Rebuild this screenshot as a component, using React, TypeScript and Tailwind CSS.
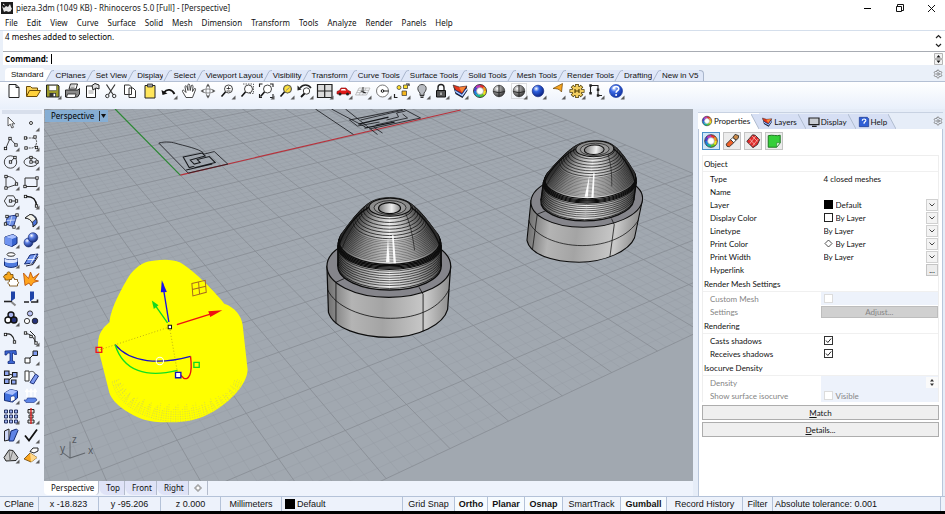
import React from "react";
import { Settings } from "lucide-react";

/* ---------- shared data ---------- */

const MENUS = ["File", "Edit", "View", "Curve", "Surface", "Solid", "Mesh", "Dimension", "Transform", "Tools", "Analyze", "Render", "Panels", "Help"];

const TOOL_TABS = [
  "Standard", "CPlanes", "Set View", "Display", "Select", "Viewport Layout", "Visibility", "Transform",
  "Curve Tools", "Surface Tools", "Solid Tools", "Mesh Tools", "Render Tools", "Drafting", "New in V5",
];

const WHEEL = ["#e6352b", "#f39a1e", "#f2e21c", "#5cc52c", "#14b6a0", "#1f7fe0", "#4a3fd0", "#c238b8"];

/* ---------- icon helpers ---------- */

function ColorWheel({ cx = 9, cy = 9, r = 5 }: { cx?: number; cy?: number; r?: number }) {
  return (
    <g fill="none" strokeWidth={r * 0.56}>
      {WHEEL.map((c, i) => {
        const a = (i * Math.PI) / 4 - Math.PI / 2;
        const b = a + Math.PI / 4 + 0.05;
        return (
          <path
            key={c}
            stroke={c}
            d={`M${cx + r * Math.cos(a)} ${cy + r * Math.sin(a)}A${r} ${r} 0 0 1 ${cx + r * Math.cos(b)} ${cy + r * Math.sin(b)}`}
          />
        );
      })}
      <circle cx={cx} cy={cy} r={r * 1.3} stroke="#222" strokeWidth={0.8} />
      <circle cx={cx} cy={cy} r={r * 0.7} stroke="#444" strokeWidth={0.4} fill="#fff" />
    </g>
  );
}

const Dot = ({ x, y }: { x: number; y: number }) => (
  <rect x={x - 1.2} y={y - 1.2} width={2.4} height={2.4} fill="#fff" stroke="#111" strokeWidth={0.8} />
);

const Ball = ({ id, x = 9, y = 9, r = 5.8, a, b }: { id: string; x?: number; y?: number; r?: number; a: string; b: string }) => (
  <>
    <defs>
      <radialGradient id={id} cx="35%" cy="30%" r="75%">
        <stop offset="0" stopColor="#fff" />
        <stop offset="0.35" stopColor={a} />
        <stop offset="1" stopColor={b} />
      </radialGradient>
    </defs>
    <circle cx={x} cy={y} r={r} fill={`url(#${id})`} stroke={b} strokeWidth={0.6} />
  </>
);

type Tool = { name: string; art: React.ReactNode; more?: boolean };

const LayersArt = (
  <>
    <path d="M2 3.500l2.500 8.500 7 4 5-7.500-1-4.500-5 7-6.500-4z" fill="#16181f" />
    <path d="M3.500 8l1.500 3 6.500 3.800 4.300-6.300v-1.500z" fill="#2c62d8" />
    <path d="M3 6.500l1.500 2.500 6.500 4 5-7v1.500l-4.700 6.500-6.600-4z" fill="#fff" />
    <path d="M2 3l6.500 2 7.500-1-5 7.500-6.500-3.500z" fill="#e6351c" stroke="#222" strokeWidth=".6" />
    <path d="M8 5.500l7-1-4 6z" fill="#f7873a" />
  </>
);

const MagnifierArt = (
  <>
    <circle cx="10.500" cy="7" r="4" fill="#fff" stroke="#444" />
    <path d="M7.500 10L3.500 14.500" stroke="#111" strokeWidth="1.600" />
  </>
);

const TOP_TOOLS: Tool[] = [
  { name: "New", art: <path d="M4 2.500h7l3 3v10H4zM11 2.500v3h3" fill="#fff" stroke="#222" /> },
  {
    name: "Open",
    art: (
      <>
        <path d="M2.500 14V4.500h4l1.500 1.500h5.500v3" fill="#f8d25a" stroke="#6b4a05" />
        <path d="M2.500 14.500l3-6h11l-3.500 6z" fill="#ffd23d" stroke="#6b4a05" />
      </>
    ),
  },
  {
    name: "Save",
    more: true,
    art: (
      <>
        <path d="M2.500 3h11.500l1 1v11H2.500z" fill="#9c9a2b" stroke="#222" />
        <path d="M5 3.500h7.500v5H5z" fill="#fff" stroke="#444" strokeWidth=".5" />
        <path d="M5.500 11h6.500v4H5.500z" fill="#333" />
        <path d="M9.500 11.700h1.700v2.500H9.500z" fill="#fff" />
      </>
    ),
  },
  {
    name: "Print",
    art: (
      <>
        <path d="M6 7l1.500-5h7L13 7z" fill="#fff" stroke="#222" />
        <path d="M2.500 8h12.500l1.500-1.500V12l-2 3H2.500z" fill="#8a8a8a" stroke="#222" />
        <path d="M4.500 12h8.500l-1 3.500H3.500z" fill="#fff" stroke="#222" strokeWidth=".8" />
        <path d="M8 4h4M7.500 5.500h4" stroke="#666" strokeWidth=".6" />
      </>
    ),
  },
  {
    name: "Document properties",
    art: (
      <>
        <path d="M3.500 4h9v11.500h-9z" fill="#fff" stroke="#222" />
        <path d="M9 3.500l3-2 4 1.500v4l-3-1-3 2z" fill="#ddd" stroke="#222" />
        <path d="M5.500 9h5M5.500 11h5" stroke="#777" strokeWidth=".7" />
      </>
    ),
  },
  {
    name: "Cut",
    art: (
      <g fill="none" stroke="#333">
        <path d="M4.500 2.500l6.500 10M13 2.500l-6.500 10" strokeWidth="1.200" />
        <circle cx="5.300" cy="14" r="1.700" />
        <circle cx="12.200" cy="14" r="1.700" />
      </g>
    ),
  },
  {
    name: "Copy",
    art: <path d="M3.500 3h5l2 2v7.500h-7zM8 6h4l2.500 2.500V15.500H8z" fill="#fff" stroke="#333" />,
  },
  {
    name: "Paste",
    art: (
      <>
        <path d="M4 3.500h10v12.500H4z" fill="#ffe65c" stroke="#222" />
        <path d="M6.500 2h5v3h-5z" fill="#999" stroke="#222" strokeWidth=".7" />
      </>
    ),
  },
  {
    name: "Undo",
    more: true,
    art: (
      <>
        <path d="M4 10.500C7 6.500 12 7 14.500 12" fill="none" stroke="#111" strokeWidth="1.800" />
        <path d="M1.500 8l1 5 5-1.500z" fill="#111" />
      </>
    ),
  },
  {
    name: "Pan",
    art: (
      <path
        d="M6 15.500L2.500 9.500c-.5-1.500 1-2 2-.5L6 10.500 5 5c-.2-1.600 1.600-1.700 2 0L8 8.500l-.2-5.300c0-1.500 1.800-1.500 2 0L10.200 8.500l1-4.500c.4-1.400 2-1 1.800.5L12.500 9.500l1.500-2.500c.8-1.200 2-.5 1.500.8L12.500 15.500z"
        fill="#fff"
        stroke="#333"
        strokeWidth=".9"
      />
    ),
  },
  {
    name: "Rotate view",
    art: (
      <>
        <g fill="none" stroke="#777" strokeWidth=".8">
          <ellipse cx="9" cy="9" rx="6" ry="2" />
          <ellipse cx="9" cy="9" rx="2" ry="6" />
        </g>
        <path d="M9 1.500l1.800 3H7.200zM9 16.500l1.800-3H7.200zM1.500 9l3-1.800v3.600zM16.500 9l-3-1.800v3.600z" fill="#555" />
      </>
    ),
  },
  { name: "Zoom dynamic", more: true, art: <>{MagnifierArt}<path d="M8.500 6.500h4M10.500 4.500v3M8.500 9h4" stroke="#222" strokeWidth=".8" /></> },
  { name: "Zoom window", art: <>{MagnifierArt}<path d="M5 2h10.500v9.500h-4" fill="none" stroke="#444" strokeWidth=".8" strokeDasharray="1.500 1" /></> },
  {
    name: "Zoom extents",
    more: true,
    art: <>{MagnifierArt}<path d="M2.500 5V2h3M13 2h3v3M16 12v3.500h-3M5 15.500H2.500V12" fill="none" stroke="#222" strokeWidth="1.100" /></>,
  },
  {
    name: "Zoom selected",
    more: true,
    art: <>{MagnifierArt}<circle cx="10.500" cy="7" r="3.700" fill="#ffe23c" stroke="#444" strokeWidth=".6" /><path d="M9 8.500l3.500-3" stroke="#888" /></>,
  },
  {
    name: "Undo view",
    more: true,
    art: (
      <>
        <path d="M4 6C7 2 12 2 15 6" fill="none" stroke="#222" strokeWidth="1.500" />
        <path d="M1.500 3.500v5l4-1z" fill="#222" />
        <circle cx="10.500" cy="9" r="3.200" fill="#fff" stroke="#444" />
        <path d="M8.500 11.500L5 15" stroke="#111" strokeWidth="1.800" />
      </>
    ),
  },
  { name: "Four viewports", more: true, art: <path d="M1.500 2.500h14.500v13H1.500zM8.700 2.500v13M1.500 9h14.500" fill="#dcdcdc" stroke="#222" strokeWidth="1.200" /> },
  {
    name: "Named view",
    more: true,
    art: (
      <>
        <path d="M2 9.500l2.500-1 1.500-2.500h5l2 2.500 2.500 1v2.500H2z" fill="#e01818" stroke="#7a0d0d" strokeWidth=".6" />
        <path d="M6.500 7h3.500l1.200 1.500H5.800z" fill="#fff" />
        <circle cx="5" cy="12" r="1.500" fill="#222" />
        <circle cx="12.500" cy="12" r="1.500" fill="#222" />
      </>
    ),
  },
  {
    name: "Set CPlane",
    more: true,
    art: (
      <>
        <path d="M5 6h11l-3.500 7h-11zM3.800 8.300h11M2.600 10.600h11M8.500 6L5 13M12 6l-3.500 7" fill="none" stroke="#aaa" strokeWidth=".7" />
        <path d="M9 5v5l3 1M7 9l4 2" fill="none" stroke="#222" strokeWidth=".9" />
      </>
    ),
  },
  {
    name: "Object snap",
    more: true,
    art: (
      <>
        <circle cx="8.500" cy="9" r="6" fill="#fff" stroke="#777" />
        <path d="M8.500 9h6" stroke="#222" />
        <circle cx="8.500" cy="9" r="1.300" fill="#fff" stroke="#111" />
      </>
    ),
  },
  {
    name: "Select",
    more: true,
    art: (
      <>
        <path d="M1.500 12v3.500h3M13 2h3v2" fill="none" stroke="#222" strokeWidth="1.200" />
        <circle cx="6" cy="5.500" r="2" fill="#ffe02c" stroke="#333" strokeWidth=".7" />
        <path d="M10.500 3h4v3.500h-4z" fill="#ffe02c" stroke="#333" strokeWidth=".7" />
        <path d="M9 9h4.500v4.500H9z" fill="#f5b61e" stroke="#333" strokeWidth=".7" />
      </>
    ),
  },
  {
    name: "Hide",
    more: true,
    art: (
      <>
        <path d="M7 11C3 7 5 2.500 9 2.500S15 7 11 11v2.500H7z" fill="#b9bcc2" stroke="#444" />
        <path d="M7 13.500h4M7.500 15.300h3" stroke="#333" strokeWidth="1.300" />
      </>
    ),
  },
  {
    name: "Lock",
    more: true,
    art: (
      <>
        <path d="M6 8.500V5.500c0-4 6-4 6 0v3" fill="none" stroke="#222" strokeWidth="1.400" />
        <path d="M4.500 8.500h9v6.500h-9z" fill="#555" stroke="#111" />
        <path d="M9 10.500v2.500" stroke="#fff" />
      </>
    ),
  },
  { name: "Layers", more: true, art: LayersArt },
  { name: "Properties", art: <ColorWheel /> },
  {
    name: "Shaded",
    art: (
      <>
        <Ball id="gray1" a="#a0a0a0" b="#333" />
        <path d="M3.200 9.500q5.800 2.500 11.600 0M9 3v12" fill="none" stroke="#222" strokeWidth=".9" />
      </>
    ),
  },
  {
    name: "Ghosted",
    more: true,
    art: (
      <>
        <path d="M1.500 1.500h15v15h-15z" fill="none" stroke="#999" strokeWidth=".6" strokeDasharray="1 1" />
        <Ball id="gray2" a="#a0a0a0" b="#333" />
        <path d="M3.200 9.500q5.800 2.500 11.600 0M9 3v12" fill="none" stroke="#222" strokeWidth=".9" />
      </>
    ),
  },
  { name: "Render", more: true, art: <Ball id="blue1" a="#2c5fe0" b="#0a1f7a" /> },
  {
    name: "Spotlight",
    more: true,
    art: <path d="M5 6.500L14.500 1.500l-1 8.500q-1.500-2.500-4-3-2-.5-4.500-.5z" fill="#f9a51f" stroke="#6a4306" strokeWidth=".7" />,
  },
  {
    name: "Options",
    more: true,
    art: (
      <>
        <g stroke="#4a3800" strokeWidth="3.600">
          <path d="M9 2v14M1.500 9h15M4 4l10 10M14 4L4 14" />
        </g>
        <g stroke="#f2cf62" strokeWidth="2.200">
          <path d="M9 2.700v12.600M2.200 9h13.600M4.500 4.500l9 9M13.500 4.500l-9 9" />
        </g>
        <circle cx="9" cy="9" r="4.500" fill="#f2cf62" />
        <path d="M7 7v4M11 7v4M7 9h4" fill="none" stroke="#4a3800" strokeWidth="1.100" />
      </>
    ),
  },
  {
    name: "Dimension",
    more: true,
    art: (
      <>
        <path d="M3.500 3.500v8M4 3.500h7v5M11 8.500v5h4" fill="none" stroke="#222" strokeWidth="1.100" />
        <path d="M2.300 2.200h2.500v2.500H2.300zM9.800 6.500h2.500V9H9.800zM2.300 10h2.500v2.500H2.300zM9.800 12.300h2.500v2.500H9.800z" fill="#222" />
      </>
    ),
  },
  {
    name: "Help",
    more: true,
    art: (
      <>
        <Ball id="help1" a="#3c6be8" b="#0f2f9c" r={6.5} />
        <path d="M6.500 7c0-3.500 5.500-3.200 5.200 0-.2 1.700-2.500 1.700-2.600 3.700" fill="none" stroke="#fff" strokeWidth="1.700" />
        <circle cx="9.100" cy="12.900" r="1" fill="#fff" />
      </>
    ),
  },
];

const SIDE_TOOLS: Tool[] = [
  { name: "Pointer", art: <path d="M6 3v9l2.300-1.800 1.500 3.800 1.700-.7-1.600-3.500h2.800z" fill="#fff" stroke="#333" strokeWidth=".8" /> },
  { name: "Point", more: true, art: <circle cx="9" cy="9" r="1.500" fill="#fff" stroke="#333" /> },
  { name: "Polyline", more: true, art: <><path d="M3.500 15L8 4.500l6 6.500" fill="none" stroke="#444" /><Dot x={3.5} y={14.5} /><Dot x={8} y={4.5} /><Dot x={14} y={11} /></> },
  { name: "Control curve", more: true, art: <><path d="M4 4h8c5 2 2 10-2 10H4" fill="none" stroke="#555" strokeDasharray="2 .8" /><Dot x={3.5} y={4} /><Dot x={13} y={3} /><Dot x={4} y={14} /><Dot x={14.5} y={13.5} /></> },
  { name: "Circle", more: true, art: <><circle cx="8.500" cy="9" r="6.200" fill="none" stroke="#444" /><path d="M8.500 9l4-4.500" stroke="#333" /><Dot x={8.5} y={9} /><Dot x={13} y={4.5} /></> },
  { name: "Ellipse", more: true, art: <><ellipse cx="9" cy="9" rx="7" ry="4.500" fill="none" stroke="#444" /><path d="M9 9V4.500M9 9h6" stroke="#333" /><Dot x={9} y={4.5} /><Dot x={9} y={9} /><Dot x={15} y={9} /></> },
  { name: "Arc", more: true, art: <><path d="M4 3.500C9 3 14 6 14.500 11.500L4 15z" fill="none" stroke="#444" /><Dot x={4} y={3.5} /><Dot x={14.5} y={11} /><Dot x={4} y={15} /></> },
  { name: "Rectangle", more: true, art: <><path d="M3 5h12v8.500H3z" fill="none" stroke="#333" /><Dot x={15} y={5} /><Dot x={3} y={13.5} /></> },
  { name: "Polygon", more: true, art: <><path d="M5.500 3.800h6l3.200 5.200-3.200 5.200h-6L2.300 9z" fill="none" stroke="#444" /><path d="M8.500 9h6" stroke="#333" /><Dot x={8.5} y={9} /><Dot x={14.5} y={9} /></> },
  { name: "Fillet curves", more: true, art: <><path d="M3.500 4.500C11 4 14 7 14.500 14" fill="none" stroke="#111" strokeWidth="1.600" /><Dot x={3.5} y={4.5} /><Dot x={14.5} y={14} /></> },
  { name: "Surface from points", more: true, art: <><path d="M5.500 4.500L15 3l-3.500 11.500L3.500 12z" fill="#6d8fe6" stroke="#1c2f7a" /><path d="M4.500 8.500l9-.5M10 4L7.500 13" stroke="#fff" strokeWidth=".6" /><Dot x={5} y={4.5} /><Dot x={15} y={3} /><Dot x={3.5} y={12} /><Dot x={12} y={15} /></> },
  { name: "Curved surface", more: true, art: <><path d="M3 6l5-3.500c5 0 7.500 4 7 9L11 15c.5-5-3-8.500-8-9z" fill="#4a72d8" stroke="#1a1a1a" /><path d="M3 6c3 0 6 2 7 4.500L14 7C12 4 10 2.500 8 2.500z" fill="#f2f2ea" stroke="#1a1a1a" strokeWidth=".7" /></> },
  { name: "Box", more: true, art: <><path d="M3 6l8-2.500 4 2.500v6.500l-5 3-7-2.500z" fill="#3763cf" stroke="#142a70" /><path d="M3 6l8-2.500 4 2.500-5 2z" fill="#a9c0ff" /><path d="M3 6l7 2v7.500L3 13z" fill="#6f93f0" /></> },
  { name: "Boolean union", more: true, art: <><Ball id="sb1" x={6.5} y={11.5} r={4.5} a="#5d80e6" b="#14286e" /><Ball id="sb2" x={11} y={6.5} r={4.8} a="#5d80e6" b="#14286e" /></> },
  { name: "Extract", more: true, art: <><ellipse cx="9" cy="3.500" rx="4" ry="1.800" fill="#fff" stroke="#333" /><path d="M2.500 7.500c3 2 10 2 13 0v7c-3 2.500-10 2.500-13 0z" fill="#4f7be0" stroke="#142a70" /><path d="M2.500 7.500c3 2 10 2 13 0v3c-3 2-10 2-13 0z" fill="#dfe8ff" /></> },
  { name: "Mesh surface", more: true, art: <><path d="M2.500 13l5.500-9 8-1-5 9z" fill="#6e92ee" stroke="#142a70" /><path d="M5.500 8.500h7M8.500 13l5-9.500" stroke="#fff" strokeWidth=".8" /><path d="M4 15l7-1.500 5-8" fill="none" stroke="#223" /></> },
  { name: "Join", art: <><path d="M3 4.500h2c-.8-3.500 4-3.500 3.500 0h2.500v3c2 0 2 2.500 0 2.500H3v-2c-2 0-2-2.500 0-2.500z" fill="#f6a71e" stroke="#6d4200" strokeWidth=".8" /><path d="M7.500 9.500h2c0-2.500 3-2.500 3 0h3v2c1.500.5 1.500 2 0 2.500V16h-8v-1.500c-2 0-2-3 0-3z" fill="#fff" stroke="#6d4200" strokeWidth=".8" /></> },
  { name: "Explode", art: <path d="M3 15.500L1.500 3l5 5.500L8.500 2l2.500 6L17 3.500 12.500 10l4 1-5 1.500-2.500 3.500-2-3z" fill="#ffa41e" stroke="#b84a00" strokeWidth=".8" /> },
  { name: "Trim", art: <><path d="M9 1.500h4v7l-4 3z" fill="#1f44a8" /><path d="M2 11.500h8" stroke="#222" strokeWidth="1.600" /><path d="M9.500 12l4 3.500" stroke="#888" strokeWidth="2" /></> },
  { name: "Split", art: <><path d="M8 1.500h4v7l-4 3z" fill="#1f44a8" /><path d="M2 12h5M9 12h6.500v-2.500" fill="none" stroke="#222" strokeWidth="1.600" /></> },
  { name: "Group", more: true, art: <g stroke="#111" strokeWidth="1.400"><circle cx="9" cy="6" r="3" fill="#a9b4ee" /><circle cx="6" cy="11" r="3" fill="#fff" /><circle cx="12" cy="11" r="3" fill="#26327a" /></g> },
  { name: "Ungroup", art: <g stroke="#222" strokeWidth=".9"><circle cx="8" cy="4.500" r="2.600" fill="#b9c1f4" /><circle cx="5" cy="12" r="2.600" fill="#fff" /><circle cx="13" cy="12" r="2.800" fill="#26327a" /></g> },
  { name: "Edit points", art: <><path d="M3 5.500c5-2 8.500 1 9.500 7" fill="none" stroke="#222" strokeWidth="1.200" /><Dot x={3.5} y={5.5} /><Dot x={12.5} y={13} /></> },
  { name: "Control points", more: true, art: <><path d="M2.500 4.500c6 0 10 4 11.500 10.500M8 2l5 5v6" fill="none" stroke="#222" /><Dot x={3.5} y={4} /><Dot x={9} y={7.5} /><Dot x={14} y={14} /></> },
  { name: "Text", art: <path d="M3 3l11-.5.5 4h-2l-1-1.500H10.500v8l2 .5v2H6v-2l2-.5V5H5.500l-1 2H3z" fill="#3c66d4" stroke="#132a78" strokeWidth=".8" /> },
  { name: "Move", more: true, art: <><path d="M3 10h5v5H3z" fill="#fff" stroke="#222" /><path d="M11 3h4.500v4.500H11z" fill="#7e9af0" stroke="#222" /><path d="M7.500 10.500L11 7" stroke="#222" /></> },
  { name: "Copy objects", art: <><path d="M2.500 3h4.500v4.500H2.500zM10.500 4.500H15V9h-4.500zM2.500 11h4.500v4.500H2.500zM9.500 12H14v4H9.500z" fill="#8ea6f2" stroke="#1a1a1a" strokeWidth="1.100" /><path d="M7 6l3.500 1M7 12l4-4" stroke="#222" /></> },
  { name: "Rotate", art: <><path d="M3 3h4v10H3z" fill="#fff" stroke="#333" /><path d="M8 14.500L13.500 6l3 2-5 8z" fill="#7e9af0" stroke="#1c2f7a" /><path d="M7.500 4c3-1.500 5 0 5.500 2" fill="none" stroke="#444" /></> },
  { name: "Solid edit", more: true, art: <><path d="M2.500 6l6-3.500 7 1.500v7l-5 4-8-1.500z" fill="#3f6fdd" stroke="#142a70" /><path d="M2.500 6l6-3.500 7 1.500-5 4z" fill="#a9c0ff" /><path d="M8.500 15V11c0-2 4-3 4.500-.5V13z" fill="#fff" stroke="#142a70" strokeWidth=".6" /></> },
  { name: "Extrude", more: true, art: <><path d="M2 13h2.500l1-2h8l1.500 2-3 2.500H4z" fill="#5e86e8" stroke="#1a2f80" strokeWidth=".6" /><path d="M5 10V3M9 10V3M13 10V3M3.500 5L5 2.500 6.500 5M7.500 5L9 2.500 10.500 5M11.500 5L13 2.500 14.500 5" fill="none" stroke="#fff" strokeWidth="1.500" /></> },
  {
    name: "Array",
    more: true,
    art: (
      <g fill="#9fb2f2" stroke="#16224e" strokeWidth=".9">
        <path d="M2.500 3h3v3h-3zM7.500 3h3v3h-3zM12.500 3h3v3h-3zM2.500 8h3v3h-3zM7.500 8h3v3h-3zM12.500 8h3v3h-3zM2.500 13h3v3h-3zM7.500 13h3v3h-3zM12.500 13h3v3h-3z" />
      </g>
    ),
  },
  { name: "Align", more: true, art: <><path d="M6 2.500h6v3.500H6zM7 8h4v3H7zM6 13h6v3H6z" fill="#ddd" stroke="#222" /><path d="M9 1v16" stroke="#e01818" strokeWidth="1.300" /></> },
  { name: "Orient", more: true, art: <><path d="M2.500 5l4.500-2v11l-4.500 1z" fill="#cfd8f8" stroke="#222" /><path d="M9 5l5.500-2 1.500 1.500L11.500 15H7z" fill="#5f84e6" stroke="#142a70" /></> },
  { name: "Check", more: true, art: <path d="M3 9.500L7 14.500 15 3.500" fill="none" stroke="#111" strokeWidth="1.800" /> },
  { name: "Mesh cone", more: true, art: <><path d="M2 11.500L7 4l4 .5 5 7-2 3-10 .5z" fill="#c9c9c9" stroke="#222" /><path d="M7 4l1 11M11 4.500l-3 10" stroke="#666" strokeWidth=".8" /></> },
  { name: "Extrude solid", more: true, art: <><path d="M2 13L8 7l7 4.500-6 4.500z" fill="#f9a51f" stroke="#6a4306" strokeWidth=".8" /><path d="M8 7l1 9 6-4.500z" fill="#ffd98c" /><path d="M8 5.500l3-3.500h5v3l-4 2z" fill="#fff" stroke="#222" /></> },
];

function ToolButton({ tool }: { tool: Tool }) {
  return (
    <button type="button" aria-label={tool.name} className="block shrink-0">
      <svg viewBox="0 0 18 18" className="block size-[18px]">
        {tool.art}
        {tool.more && <path d="M17.500 13.500v4h-4z" fill="#5a5a5a" />}
      </svg>
    </button>
  );
}

/* ---------- 3D scene ---------- */

const AX = 0.0256;
const BY = 0.0422;

function project(u: number, v: number): [number, number] {
  const w = 1 + AX * u + BY * v;
  return [(180 + AX * 1826 * u - BY * 189 * v) / w, (174 - 200 * AX * u - 200 * BY * v) / w];
}

function gridPath(step: number, skip: number) {
  let d = "";
  const n = Math.round(20 / step);
  for (let i = 0; i <= n; i++) {
    if (skip && i % skip === 0) continue;
    const k = -10 + i * step;
    const lines = [
      [project(k, -10), project(k, 10)],
      [project(-10, k), project(10, k)],
    ];
    for (const [a, b] of lines) {
      d += `M${a[0].toFixed(1)} ${a[1].toFixed(1)}L${b[0].toFixed(1)} ${b[1].toFixed(1)}`;
    }
  }
  return d;
}

const MINOR = gridPath(0.2, 5);
const MAJOR = gridPath(1, 0);

const coneRadius = (s: number) => 21 + 29.5 * Math.pow(s, 0.75);

function rings() {
  const out: { cy: number; rx: number; w: number }[] = [];
  out.push({ cy: 265, rx: 51.5, w: 1.4 });
  out.push({ cy: 263.5, rx: 51.5, w: 0.8 });
  for (let i = 1; i <= 7; i++) out.push({ cy: 263 - i * 2.4, rx: 51.5, w: 0.65 });
  for (let i = 0; i <= 4; i++) out.push({ cy: 244.5 - i * 1.1, rx: 51.5 - i * 0.3, w: 1.3 });
  for (let i = 0; i <= 13; i++) {
    const s = 0.94 - (i / 13) * 0.46;
    out.push({ cy: 206 + 34 * s, rx: coneRadius(s), w: 0.4 });
  }
  for (let i = 0; i <= 6; i++) {
    const s = 0.43 - (i / 6) * 0.4;
    out.push({ cy: 206 + 34 * s, rx: coneRadius(s), w: 0.75 });
  }
  return out;
}

const RINGS = rings();

function Tower() {
  return (
    <g stroke="#0c0c0c">
      <path d="M326.500 265L328 311C333 327 360 336 389 336S443 323 447 308L450 265z" fill="url(#drum)" strokeWidth="1.200" />
      <ellipse cx="388.300" cy="265" rx="61.800" ry="31" fill="#85858b" strokeWidth="1.200" />
      <path d="M327 288C334 305 362 317 390 317S440 306 448.500 288" fill="none" strokeWidth=".8" />
      <path d="M335.500 281V322M422.500 293V330M335.500 281l9-4M422.500 293l-4-7" fill="none" strokeWidth=".8" />
      {RINGS.map((r, i) => (
        <ellipse key={i} cx={389} cy={r.cy} rx={r.rx} ry={r.rx * 0.46} fill="url(#cone)" strokeWidth={r.w} />
      ))}
      <path d="M387.500 236L385.500 261h3.500zM391.500 234l1.500 28h2.500L393 234z" fill="#fff" stroke="none" opacity=".95" />
      <path d="M362 213C352 225 345 236 342 247M405 212c5 12 7 22 9 37" fill="none" strokeWidth=".6" />
      <path d="M338.500 247C339 236 352 216 368.500 206M439.500 247C438 236 424 216 410.500 206" fill="none" strokeWidth="1.300" />
      <path d="M337.500 244V265M440.500 244V265" fill="none" strokeWidth="1.500" />
      <ellipse cx="389.500" cy="206" rx="21" ry="9" fill="#8b8b8b" strokeWidth="1.100" />
      <ellipse cx="389.500" cy="206.500" rx="16" ry="7" fill="#999" strokeWidth=".7" />
      <ellipse cx="389" cy="207" rx="11" ry="5.500" fill="url(#hole)" strokeWidth="1.100" />
    </g>
  );
}

function Speckle() {
  const marks: React.ReactNode[] = [];
  for (let i = 0; i < 74; i++) {
    const t = i / 73;
    const a = Math.PI * (0.06 + t * 0.88);
    const c = Math.cos(a);
    const s = Math.sin(a);
    marks.push(
      <path
        key={i}
        d={`M${290 + 198 * c} ${395 + 146 * s}L${290 + (180 - (i % 3) * 4) * c} ${395 + (94 + (i % 4) * 7) * s}`}
        strokeDasharray={i % 2 ? "3 4" : "2 5"}
      />
    );
  }
  return <g stroke="#a4a8a8" strokeWidth="1.800" opacity=".8" fill="none">{marks}</g>;
}

function SelectedPiece() {
  return (
    <g transform="translate(80 240) scale(.3333)">
      <path
        d="M225 58C250 54 280 55 300 64C330 80 395 140 432 187C465 198 484 225 487 250L502 385C500 430 450 480 400 510C360 532 330 540 290 542C250 544 215 542 190 534C150 520 100 490 88 455L54 320C52 280 65 262 88 243C92 200 125 140 150 100C175 70 195 60 225 58z"
        fill="#ff0"
      />
      <Speckle />
      <g fill="none" strokeWidth="3">
        <path d="M268 257L60 325M268 257L293 400" stroke="#a08a20" strokeDasharray="3 6" strokeWidth="2" />
        <path d="M266 242L247 125" stroke="#1a10e8" strokeWidth="4" />
        <path d="M262 245L222 188" stroke="#10d820" strokeWidth="4" />
        <path d="M290 250L395 217" stroke="#f01010" strokeWidth="4" />
        <path d="M105 310C150 365 240 370 331 345" stroke="#1a10c8" strokeWidth="4" />
        <path d="M105 310C130 390 200 410 292 387" stroke="#10e020" strokeWidth="4" />
        <path d="M331 345C338 400 325 418 310 410L295 395" stroke="#e81010" strokeWidth="4" />
        <path d="M335 127l40-10 3 36-40 11zM336 145l41-10M355 122l3 37" stroke="#a86a20" strokeWidth="3" />
        <circle cx="239" cy="359" r="11" stroke="#fff" />
        <path d="M48 318h17v15H48z" stroke="#f01818" strokeWidth="4" />
        <path d="M341 363h16v15h-16z" stroke="#10d820" strokeWidth="4" />
        <path d="M286 393h16v16h-16z" stroke="#1010c0" strokeWidth="4" fill="#fff" />
        <path d="M264 252h10v10h-10z" stroke="#111" fill="#fff" />
      </g>
      <path d="M245 117l15 35-18 1z" fill="#1a10e8" />
      <path d="M215 178l20 14-14 11z" fill="#10d820" />
      <path d="M426 207l-36 20-6-17z" fill="#f01010" />
    </g>
  );
}

function Scene() {
  return (
    <svg viewBox="44 108 648 374" preserveAspectRatio="xMinYMin slice" className="absolute inset-0 block size-full" role="img" aria-label="Perspective view of three turned pieces">
      <defs>
        <linearGradient id="drum">
          <stop offset="0" stopColor="#6e6e6e" />
          <stop offset=".2" stopColor="#b4b4b4" />
          <stop offset=".45" stopColor="#a4a4a4" />
          <stop offset=".8" stopColor="#c9c9c9" />
          <stop offset="1" stopColor="#8a8a8a" />
        </linearGradient>
        <linearGradient id="cone">
          <stop offset="0" stopColor="#3c3c3c" />
          <stop offset=".2" stopColor="#9a9a9a" />
          <stop offset=".5" stopColor="#ededed" />
          <stop offset=".75" stopColor="#b0b0b0" />
          <stop offset="1" stopColor="#484848" />
        </linearGradient>
        <linearGradient id="hole">
          <stop offset="0" stopColor="#777" />
          <stop offset=".6" stopColor="#eee" />
          <stop offset="1" stopColor="#888" />
        </linearGradient>
      </defs>
      <path d={MINOR} stroke="#9299a1" strokeWidth=".5" opacity=".7" fill="none" />
      <path d={MAJOR} stroke="#878c93" strokeWidth=".8" fill="none" />
      <path d="M180 174L460 109" stroke="#b8323c" strokeWidth="1.200" />
      <path d="M180 174L115 108" stroke="#2c8a34" strokeWidth="1.200" />
      <g fill="none" stroke="#16181c" strokeWidth=".8">
        <path d="M158.600 142C166 140 172 141 178 143C190 146 202 149 204 153l10-2.500 13.500 12.500L188 172z" />
        <path d="M183 156l19-4 3 3-15 4 4 4 6-1.500-3-3 12-3 6 6-20 5-2-1-4 1zM186 169l26-6" strokeWidth="1" />
        <path d="M315 108l38 25.500M331 108l34 18M345 108l32 25.500M349 119l53-10.500M349 119l8 6 22-4M360 119l43-10M369 128l51-11-17-9M375 124l32-7-5-4M386 119l12-3-2-4 9-2M382 132l-9-6" />
        <path d="M364 127l30-6M358 123l30-7" strokeWidth="1.300" />
      </g>
      <Tower />
      <g transform="matrix(.9 0 -.118 .87 267.700 -31.400)">
        <Tower />
      </g>
      <SelectedPiece />
      <path d="M70 440v16.500l15-5M70 456.500l-8-6" fill="none" stroke="#63686e" />
      <g fill="#55595f" fontFamily="'Noto Sans', sans-serif" fontSize="10">
        <text x="72" y="441">z</text>
        <text x="88" y="452">x</text>
        <text x="60" y="450">y</text>
      </g>
    </svg>
  );
}

/* ---------- window chrome ---------- */

function TitleBar() {
  return (
    <header className="flex h-4 items-center bg-white text-[8px] leading-3 text-[#222]">
      <svg viewBox="0 0 12 12" className="ml-px size-[12px]">
        <path d="M0 0h12v12H0z" fill="#1c1c1c" />
        <path d="M1 4l2 2 2-2 2 1 2-3 1 3 1 2-3 3-3-1-2 1z" fill="#e8e8e8" />
        <path d="M2 2l1.500 1M8 8l2 1" stroke="#fff" />
      </svg>
      <h1 className="ml-[3px] font-['Noto_Sans',sans-serif]">pieza.3dm (1049 KB) - Rhinoceros 5.0 [Full] - [Perspective]</h1>
      <div className="ml-auto flex items-center gap-5 pr-2">
        <button type="button" aria-label="Minimize" className="flex size-3 items-center justify-center">
          <span className="h-px w-[7px] bg-black" />
        </button>
        <button type="button" aria-label="Restore" className="flex size-3 items-center justify-center">
          <svg viewBox="0 0 9 9" className="size-[9px]" fill="none" stroke="#111">
            <path d="M1.500 2.500h5v5h-5zM2.500 2.500v-2h6v6h-2" />
          </svg>
        </button>
        <button type="button" aria-label="Close" className="flex size-3 items-center justify-center">
          <svg viewBox="0 0 9 9" className="size-[9px]" fill="none" stroke="#111">
            <path d="M1 1l7 7M8 1L1 8" />
          </svg>
        </button>
      </div>
    </header>
  );
}

function MenuBar() {
  return (
    <nav className="flex h-[14px] items-center gap-[9px] bg-white pl-[5px] font-['Noto_Sans',sans-serif] text-[8px] leading-3 text-[#111]">
      {MENUS.map((m) => (
        <button type="button" key={m}>{m}</button>
      ))}
    </nav>
  );
}

function CommandArea() {
  return (
    <section className="border-t border-[#d5dfec] bg-[#eaf0f9] pb-[2px] pl-[3px] font-['Noto_Sans',sans-serif] text-[8px] leading-3">
      <div className="flex h-[20px] justify-between bg-white pl-[2px]">
        <p>4 meshes added to selection.</p>
        <svg viewBox="0 0 7 18" className="mr-[3px] h-[18px] w-[7px]" fill="none" stroke="#222" strokeWidth="1.200">
          <path d="M1 7l2.500-2.500L6 7M1 13l2.500 2.500L6 13" />
        </svg>
      </div>
      <div className="flex h-[14px] items-center border-t border-[#a8acb3] bg-white pl-[2px]">
        <label htmlFor="command" className="font-bold">Command:</label>
        <span className="ml-[3px] h-[10px] w-px bg-black" />
        <input id="command" type="text" className="min-w-0 flex-1 outline-none" />
        <svg viewBox="0 0 9 12" className="mr-[2px] h-[12px] w-[9px]">
          <path d="M.5.500h8v5h-8zM.5 6.500h8v5h-8z" fill="#f2f2f2" stroke="#b5b5b5" />
          <path d="M4.500 2l2 2.500h-4zM4.500 10l2-2.500h-4z" fill="#111" />
        </svg>
      </div>
    </section>
  );
}

function ToolArea() {
  return (
    <section className="bg-[#eaf0f9] font-['Liberation_Sans',sans-serif]">
      <div className="flex h-[15px] items-end justify-between border-b border-[#b4c0d4] pl-[5px]">
        <div role="tablist" className="flex items-end text-[8px] leading-[11px] text-[#111]">
          {TOOL_TABS.map((t, i) => (
            <button
              type="button"
              role="tab"
              key={t}
              aria-selected={i === 0}
              className={
                i === 0
                  ? "flex h-[13px] items-center rounded-t bg-white pr-[2px] pl-[6px]"
                  : "flex h-[11px] items-center bg-[#dfe7f8]"
              }
            >
              {i > 0 && (
                <svg viewBox="0 0 9 11" className="mr-px h-[11px] w-[9px]" fill="none">
                  <path d="M0 0h6L1 11H0z" fill={i === 1 ? "#ffffff" : "#dfe7f8"} />
                  <path d="M1 11L6 1.500Q7 .5 9 .5" stroke="#a9b6cc" />
                </svg>
              )}
              {t}
            </button>
          ))}
          <span className="h-[11px] w-[5px] rounded-tr border-t border-r border-[#a9b6cc] bg-[#dfe7f8]" />
        </div>
        <Settings className="mr-[2px] size-[10px] self-center text-[#777]" />
      </div>
      <div className="h-[27px] bg-linear-to-b from-white to-[#e9f0fb] pl-[5px]">
        <div className="flex max-w-[620px] justify-between">
          {TOP_TOOLS.map((t) => (
            <ToolButton key={t.name} tool={t} />
          ))}
        </div>
      </div>
    </section>
  );
}

function SideBar() {
  return (
    <aside className="w-[44px] shrink-0 bg-[#eef3fc] px-[2px] pt-px">
      <div className="h-[4px] bg-[#d8dfec]" />
      <div className="grid h-[350px] grid-cols-2 content-between pr-px">
        {SIDE_TOOLS.map((t) => (
          <ToolButton key={t.name} tool={t} />
        ))}
      </div>
    </aside>
  );
}

function ViewportArea() {
  return (
    <main className="flex min-w-0 flex-1 flex-col bg-[#eef3fc] font-['Noto_Sans',sans-serif] text-[8px] leading-3">
      <div className="relative min-h-0 flex-1 overflow-hidden bg-[#a1a8b0]">
        <Scene />
        <button type="button" className="absolute top-px left-px flex h-[12px] items-center bg-[#86aed4] pr-[2px] pl-[6px]">
          Perspective
          <span className="ml-[5px] h-[10px] w-px bg-[#333]" />
          <svg viewBox="0 0 5 4" className="ml-px h-[4px] w-[5px]"><path d="M0 0h5L2.500 4z" fill="#111" /></svg>
        </button>
      </div>
      <div role="tablist" className="flex h-[15px] pb-px text-[#111]">
        <button type="button" role="tab" aria-selected className="rounded-b border-r border-[#b4bccc] bg-white pr-[4px] pl-[7px]">Perspective</button>
        {["Top", "Front", "Right"].map((t) => (
          <button type="button" role="tab" key={t} className="rounded-bl-lg border-r border-[#b4bccc] bg-[#dfe3f7] pr-[4px] pl-[7px]">{t}</button>
        ))}
        <button type="button" aria-label="Add viewport tab" className="flex w-[19px] items-center justify-center rounded-bl-lg border-r border-[#b4bccc]">
          <svg viewBox="0 0 8 8" className="size-[8px]"><path d="M3 1h2v2h2v2H5v2H3V5H1V3h2z" fill="#fff" stroke="#777" strokeWidth=".8" /></svg>
        </button>
      </div>
    </main>
  );
}

/* ---------- properties panel ---------- */

const SectionHead = ({ children }: { children: React.ReactNode }) => (
  <h2 className="flex h-4 items-center border-b border-[#f0f0f0] pl-px">{children}</h2>
);

function Row({ label, id, disabled, children }: { label: string; id?: string; disabled?: boolean; children?: React.ReactNode }) {
  return (
    <div className={disabled ? "flex h-[13px] items-center text-[#858585]" : "flex h-[13px] items-center"}>
      <label htmlFor={id} className="w-1/2 pl-[7px]">{label}</label>
      <div className={disabled ? "flex h-full w-1/2 items-center bg-[#edf2fb] pl-[3px]" : "flex h-full w-1/2 items-center pl-[3px]"}>{children}</div>
    </div>
  );
}

function Pick({ id, value, mark }: { id: string; value: string; mark?: React.ReactNode }) {
  return (
    <>
      {mark}
      <select id={id} className="min-w-0 flex-1 appearance-none bg-transparent leading-3 outline-none" defaultValue={value}>
        <option>{value}</option>
      </select>
      <span className="flex h-[12px] w-[12px] items-center justify-center border border-[#d0d0d0] bg-[#f3f3f3]">
        <svg viewBox="0 0 6 4" className="h-[4px] w-[6px]" fill="none" stroke="#444"><path d="M.5.500L3 3 5.500.500" /></svg>
      </span>
    </>
  );
}

function Check({ id, on, disabled }: { id: string; on?: boolean; disabled?: boolean }) {
  return (
    <span className="relative block size-[9px]">
      <input
        id={id}
        type="checkbox"
        defaultChecked={on}
        disabled={disabled}
        className={disabled ? "block size-[9px] appearance-none border border-[#dcdcdc] bg-white" : "block size-[9px] appearance-none border border-[#333] bg-white"}
      />
      {on && (
        <svg viewBox="0 0 9 9" className="pointer-events-none absolute inset-0 size-[9px]" fill="none" stroke="#222"><path d="M2 4.500L3.800 6.500 7.200 2.500" /></svg>
      )}
    </span>
  );
}

const PANEL_TABS = [
  { name: "Properties", art: <ColorWheel r={5.5} /> },
  { name: "Layers", art: LayersArt },
  { name: "Display", art: <><path d="M1.500 3h15v10h-15z" fill="#c8ccd2" stroke="#222" strokeWidth="1.800" /><path d="M6 15.500h7" stroke="#222" strokeWidth="2" /></> },
  {
    name: "Help",
    art: (
      <>
        <path d="M2 2h12l2 2v12H2z" fill="#2f5fd6" stroke="#163488" />
        <path d="M6.500 7c0-3.500 5.500-3.200 5.200 0-.2 1.700-2.500 1.700-2.600 3.700v1" fill="none" stroke="#fff" strokeWidth="1.800" />
      </>
    ),
  },
];

const PANEL_MODES = [
  { name: "Object", art: <ColorWheel r={5.5} /> },
  {
    name: "Material",
    art: (
      <>
        <path d="M2.500 12.500l5-5 3.500 3.500-5 4.500q-3.500.5-3.500-3z" fill="#f0622a" stroke="#222" strokeWidth=".9" />
        <path d="M7.500 7.500l2.500-2.500 3.500 3-2.500 3z" fill="#fff" stroke="#222" strokeWidth=".9" />
        <path d="M10 5l2.500-3.500 4 1.500-.5 3L13.500 8z" fill="#c98a4a" stroke="#222" strokeWidth=".9" />
      </>
    ),
  },
  {
    name: "Texture mapping",
    art: (
      <>
        <path d="M2 9.500L8.500 2l3 .5 5 5-2.500 5.500-5 3.500z" fill="#e02c2c" stroke="#222" strokeWidth=".9" />
        <path d="M5 6.500l6 6.500M8 3.500l6 6M5 12.500l7-9M8.500 14.500l6.500-8" stroke="#f7b8b0" strokeWidth=".9" />
      </>
    ),
  },
  { name: "Decals", art: <><path d="M2.500 3C7 1.500 12 4 16 2.500V11l-4 5H2.500z" fill="#35cf3a" stroke="#156c1a" /><path d="M16 11h-4v5z" fill="#eafbe8" stroke="#156c1a" strokeWidth=".6" /></> },
];

function PropertiesPanel() {
  return (
    <aside className="flex w-[252px] shrink-0 flex-col bg-[#e6edf8] pt-px pr-[2px] pl-[5px] font-['Lato',sans-serif] text-[8px] leading-3 text-[#111]">
      <div className="h-[3px] border-b border-[#c8d2e2]" />
      <div className="flex h-[16px] items-end justify-between">
        <div role="tablist" className="flex items-end">
          {PANEL_TABS.map((t, i) => (
            <button
              type="button"
              role="tab"
              key={t.name}
              aria-selected={i === 0}
              className={
                i === 0
                  ? "flex h-[16px] items-center gap-px bg-white pl-[3px]"
                  : "flex h-[15px] items-center gap-px bg-[#d6dff4] pl-[2px]"
              }
            >
              <svg viewBox="0 0 18 18" className="size-[12px]">{t.art}</svg>
              {t.name}
              <svg viewBox="0 0 8 15" className="h-[15px] w-[8px]" fill="none">
                <path d="M0 0l8 15V0z" fill={i === 3 ? "#e6edf8" : "#d6dff4"} />
                <path d="M0 0l8 15" stroke="#b0bccf" />
              </svg>
            </button>
          ))}
        </div>
        <Settings className="size-[10px] self-center text-[#777]" />
      </div>
      <div className="flex-1 border-x border-[#b9c6da] bg-white px-[3px] pt-[3px]">
        <div className="flex gap-[3px]">
          {PANEL_MODES.map((m, i) => (
            <button
              type="button"
              key={m.name}
              aria-label={m.name}
              className={
                i === 0
                  ? "flex size-[18px] items-center justify-center border border-[#4a90c8] bg-[#cfe6f8]"
                  : "flex size-[18px] items-center justify-center border border-[#c4c4c4] bg-[#ececec]"
              }
            >
              <svg viewBox="0 0 18 18" className="size-[16px]">{m.art}</svg>
            </button>
          ))}
        </div>
        <div className="mt-[5px] border-x border-t border-[#eee]">
          <SectionHead>Object</SectionHead>
          <Row label="Type">4 closed meshes</Row>
          <Row label="Name" id="name"><input id="name" type="text" className="w-full outline-none" /></Row>
          <Row label="Layer" id="layer">
            <Pick id="layer" value="Default" mark={<span className="mr-[3px] size-[9px] bg-black" />} />
          </Row>
          <Row label="Display Color" id="dcolor">
            <Pick id="dcolor" value="By Layer" mark={<span className="mr-[3px] size-[9px] border border-[#222] bg-white" />} />
          </Row>
          <Row label="Linetype" id="ltype"><Pick id="ltype" value="By Layer" /></Row>
          <Row label="Print Color" id="pcolor">
            <Pick
              id="pcolor"
              value="By Layer"
              mark={<svg viewBox="0 0 9 9" className="mr-[3px] size-[9px]" fill="none" stroke="#222" strokeWidth=".8"><path d="M4.500 1L8 4.500 4.500 8 1 4.500z" /></svg>}
            />
          </Row>
          <Row label="Print Width" id="pwidth"><Pick id="pwidth" value="By Layer" /></Row>
          <Row label="Hyperlink">
            <button type="button" aria-label="Browse hyperlink" className="ml-auto flex h-[12px] w-[12px] items-center justify-center border border-[#c4c4c4] bg-[#ececec]">...</button>
          </Row>
          <SectionHead>Render Mesh Settings</SectionHead>
          <Row label="Custom Mesh" id="cmesh" disabled><Check id="cmesh" disabled /></Row>
          <div className="flex h-[13px] items-center text-[#858585]">
            <span className="w-1/2 pl-[7px]">Settings</span>
            <button type="button" disabled className="h-[12px] w-1/2 border border-[#bdbdbd] bg-[#d0d0d0] leading-[10px]">Adjust...</button>
          </div>
          <SectionHead>Rendering</SectionHead>
          <Row label="Casts shadows" id="cast"><Check id="cast" on /></Row>
          <Row label="Receives shadows" id="recv"><Check id="recv" on /></Row>
          <SectionHead>Isocurve Density</SectionHead>
          <Row label="Density" id="density" disabled>
            <input id="density" type="text" disabled className="min-w-0 flex-1" />
            <svg viewBox="0 0 12 11" className="h-[11px] w-[12px]"><path d="M0 0h12v11H0z" fill="#fafafa" /><path d="M6 2l2 2.500H4zM6 9l2-2.500H4z" fill="#333" /></svg>
          </Row>
          <Row label="Show surface isocurve" id="iso" disabled>
            <Check id="iso" disabled />
            <span className="ml-[3px]">Visible</span>
          </Row>
        </div>
        <button type="button" className="mt-[3px] block h-[15px] w-full border border-[#adadad] bg-[#efefef]"><u>M</u>atch</button>
        <button type="button" className="mt-[2px] block h-[15px] w-full border border-[#adadad] bg-[#efefef]"><u>D</u>etails...</button>
      </div>
    </aside>
  );
}

/* ---------- status bar ---------- */

const STATUS = [
  { text: "CPlane", cls: "w-[39px]" },
  { text: "x -18.823", cls: "w-[60px]" },
  { text: "y -95.206", cls: "w-[62px]" },
  { text: "z 0.000", cls: "w-[60px]" },
  { text: "Millimeters", cls: "w-[61px]" },
];

const TOGGLES = [
  { text: "Grid Snap", cls: "w-[52px]" },
  { text: "Ortho", cls: "w-[33px] bg-[#f6fbff] font-bold" },
  { text: "Planar", cls: "w-[37px] bg-[#f6fbff] font-bold" },
  { text: "Osnap", cls: "w-[38px] bg-[#f6fbff] font-bold" },
  { text: "SmartTrack", cls: "w-[58px]" },
  { text: "Gumball", cls: "w-[46px] bg-[#f6fbff] font-bold" },
  { text: "Record History", cls: "w-[76px]" },
  { text: "Filter", cls: "w-[30px]" },
];

function StatusBar() {
  return (
    <footer className="border-b-[3px] border-black font-['Liberation_Sans',sans-serif] text-[9px] leading-[14px] text-[#111]">
      <div className="flex h-[15px] border-t border-[#b4c2d8] bg-[#edf2fb]">
        {STATUS.map((s) => (
          <div key={s.text} className={`${s.cls} shrink-0 border-r border-[#b4c2d8] text-center whitespace-nowrap`}>{s.text}</div>
        ))}
        <button type="button" className="flex min-w-0 flex-1 items-center gap-[2px] border-r border-[#b4c2d8] pl-[3px]">
          <span className="size-[10px] bg-black" />
          Default
        </button>
        {TOGGLES.map((s) => (
          <button type="button" key={s.text} className={`${s.cls} shrink-0 border-r border-[#b4c2d8] text-center whitespace-nowrap`}>{s.text}</button>
        ))}
        <div className="w-[168px] shrink-0 border-r border-[#b4c2d8] pl-[2px]">Absolute tolerance: 0.001</div>
        <div className="w-[4px] shrink-0" />
      </div>
    </footer>
  );
}

export default function App() {
  return (
    <div className="flex h-screen flex-col overflow-hidden bg-[#eef3fc]">
      <TitleBar />
      <MenuBar />
      <CommandArea />
      <ToolArea />
      <div className="flex min-h-0 flex-1">
        <SideBar />
        <ViewportArea />
        <PropertiesPanel />
      </div>
      <StatusBar />
    </div>
  );
}
